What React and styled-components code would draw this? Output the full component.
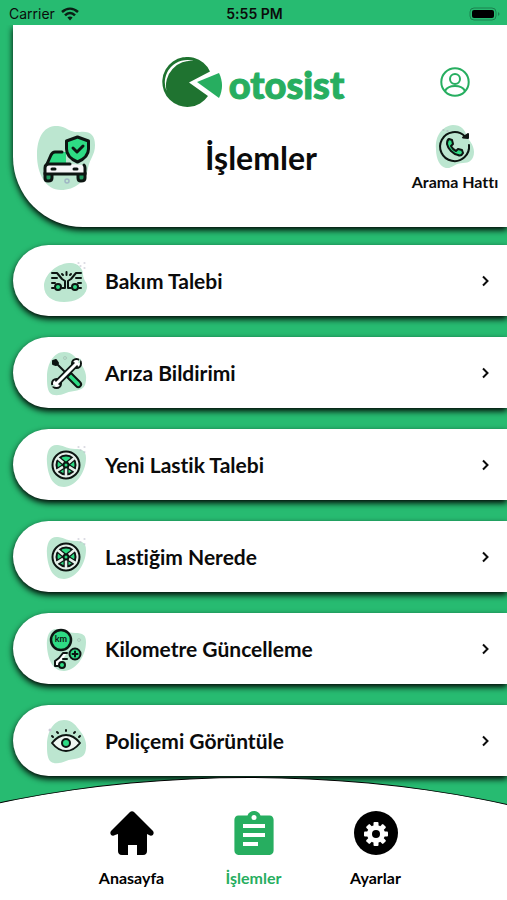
import React, { useState } from 'react';
import styled, { createGlobalStyle } from 'styled-components';

const GREEN = '#27bb71';
const BRAND = '#27ae60';
const MINT = '#bce6d0';
const ACCENT = '#2edb84';

const GlobalStyle = createGlobalStyle`
  * {
    box-sizing: border-box;
  }

  body {
    margin: 0;
    background-color: ${GREEN};
    font-family: Lato, 'Open Sans', sans-serif;
    font-variant-ligatures: none;
    color: #0b0b0b;
  }
`;

const Screen = styled.div`
  position: relative;
  display: flex;
  flex-direction: column;
  height: 100vh;
  overflow: hidden;
  background-color: ${GREEN};
`;

const StatusBar = styled.div`
  position: relative;
  z-index: 1;
  display: grid;
  grid-template-columns: 1fr auto 1fr;
  align-items: center;
  flex-shrink: 0;
  height: 25px;
  padding: 2px 7px 0 9px;
  background-color: ${GREEN};
  font-family: Inter, sans-serif;
  font-size: 14px;
  line-height: 20px;
`;

const Carrier = styled.div`
  display: flex;
  align-items: center;
  gap: 6px;
`;

const Clock = styled.span`
  font-weight: 600;
`;

const Battery = styled.svg`
  justify-self: end;
`;

const Content = styled.main`
  flex: 1;
  min-height: 0;
  padding-left: 13px;
  overflow-x: hidden;
  overflow-y: auto;
  scrollbar-width: none;
`;

const Header = styled.header`
  display: flex;
  flex-direction: column;
  gap: 18px;
  height: 202px;
  margin-bottom: 18px;
  padding-top: 32px;
  border-bottom-left-radius: 70px;
  background-color: #ffffff;
  box-shadow: 0 3px 6px #000000;
`;

const HeaderRow = styled.div`
  display: grid;
  grid-template-columns: ${(props) => props.$side} 1fr 104px;
  align-items: center;
  justify-items: center;
`;

const Logo = styled.div`
  grid-column: 2;
  display: flex;
  align-items: center;
  gap: 7px;
  height: 50px;
`;

const LogoText = styled.span`
  padding-top: 4px;
  color: ${BRAND};
  font-size: 38px;
  font-weight: 900;
  line-height: 40px;
  -webkit-text-stroke: 1px ${BRAND};
`;

const IconButton = styled.button`
  display: flex;
  flex-direction: column;
  align-items: center;
  gap: 4px;
  padding: 0;
  border: none;
  background: none;
  color: inherit;
  font-family: inherit;
  font-size: 16px;
  font-weight: 700;
  line-height: 18px;
  font-variant-ligatures: none;
  white-space: nowrap;
  cursor: pointer;
`;

const Title = styled.h1`
  margin: 0;
  font-size: 32px;
  font-weight: 700;
  line-height: 36px;
`;

const List = styled.ul`
  display: flex;
  flex-direction: column;
  gap: 21px;
  margin: 0;
  padding: 0 0 130px;
  list-style: none;
`;

const Row = styled.button`
  display: flex;
  align-items: center;
  gap: 14px;
  width: 100%;
  height: 71px;
  padding: 0 14px 0 30px;
  border: none;
  border-radius: 36px 0 0 36px;
  background-color: #ffffff;
  box-shadow: 0 3px 6px #000000;
  color: inherit;
  font-family: inherit;
  font-size: 21px;
  font-weight: 700;
  line-height: 24px;
  font-variant-ligatures: none;
  text-align: left;
  cursor: pointer;
`;

const RowLabel = styled.span`
  flex: 1;
`;

const TabBar = styled.nav`
  position: absolute;
  left: 0;
  right: 0;
  bottom: 0;
  display: flex;
  justify-content: center;
  height: 123px;
  padding-top: 34px;
  overflow: hidden;

  &::before {
    content: '';
    position: absolute;
    top: 0;
    left: -71%;
    width: 240%;
    height: 574px;
    border: 1px solid #000000;
    border-radius: 50%;
    background-color: #ffffff;
  }
`;

const Tab = styled.a`
  position: relative;
  display: flex;
  flex-direction: column;
  align-items: center;
  gap: 13px;
  width: 122px;
  color: ${(props) => (props.$active ? BRAND : '#000000')};
  font-size: 16px;
  font-weight: 700;
  line-height: 20px;
  text-decoration: none;
`;

const LineArt = styled.svg`
  flex-shrink: 0;
  fill: none;
  stroke: #0d1512;
  stroke-width: ${(props) => props.$weight || 2};
  stroke-linecap: round;
  stroke-linejoin: round;
`;

const Blob = styled.path`
  fill: ${MINT};
  stroke: none;
`;

const blobs = {
  wide: 'M1 29C1 19 12 7 26 6c8-1 14 5 14 11 0 7 5 8 4 14C42 41 31 45 21 45 9 45 1 39 1 29z',
  leaf: 'M4 22C3 10 7 3 15 4c7 1 10 4 17 4 8 0 11 2 11 9 0 15-11 29-22 29C10 46 5 35 4 22z',
  egg: 'M4 28C4 14 11 3 21 3c9 0 12 6 16 11 7 8 7 16 5 22-3 7-12 5-19 8-7 3-13 3-16 0-3-4-3-10-3-16z',
};

const Dots = () => (
  <path d="M35 6h1M41 6h1M41 11h1M37 9h1" stroke="#b9b9c8" strokeWidth="1" />
);

const CrashIcon = () => (
  <LineArt width="48" height="48" viewBox="0 0 48 48" aria-hidden="true">
    <Blob d={blobs.wide} />
    <Dots />
    <path d="M9 16h5l5 6 3 2v7h-3M9 21h5M9 26h3M9 31h2" />
    <circle cx="15" cy="30" r="3" fill={ACCENT} />
    <path d="M38 16h-5l-5 6-3 2v7h3M38 21h-5M38 26h-3M38 31h-2" />
    <circle cx="32" cy="30" r="3" fill={ACCENT} />
    <path d="M23.500 15v3M19 17l1 1M28 17l-1 1" />
  </LineArt>
);

const ToolsIcon = () => (
  <LineArt width="48" height="48" viewBox="0 0 48 48" aria-hidden="true">
    <Blob d={blobs.egg} />
    <circle cx="22" cy="9" r="1.500" stroke="#a9c9ba" strokeWidth="1" />
    <path d="M10 12l3-1 2 3-2 2-3-1z" fill="#0d1512" />
    <path d="M14 15l9 9" />
    <path d="M24 28l4-4 9 9c3 3-1 7-4 4z" fill={ACCENT} />
    <circle cx="13.500" cy="34.500" r="4.500" fill="#ffffff" />
    <circle cx="33.500" cy="14.500" r="4.500" fill="#ffffff" />
    <path d="M14 34l19-19" strokeWidth="6.500" strokeLinecap="butt" />
    <path d="M13 35l21-21" stroke="#ffffff" strokeWidth="3" />
    <path d="M8.500 37l3-.5M36 13.500l1-3" stroke={MINT} strokeWidth="1.500" />
  </LineArt>
);

const WheelIcon = () => (
  <LineArt width="48" height="48" viewBox="0 0 48 48" aria-hidden="true">
    <Blob d={blobs.leaf} />
    <Dots />
    <circle cx="23" cy="24" r="13.500" fill="#e4efe9" />
    <circle cx="23" cy="24" r="9.500" fill={ACCENT} strokeWidth="2" />
    {[50, 122, 180, 238, 310].map((angle) => (
      <g key={angle} transform={`rotate(${angle} 23 24)`}>
        <path d="M23 22V14" strokeWidth="5" strokeLinecap="butt" />
        <path d="M23 20v-7" stroke="#e4efe9" strokeWidth="2.500" />
      </g>
    ))}
    <circle cx="23" cy="24" r="2.500" fill={ACCENT} />
  </LineArt>
);

const MileageIcon = () => (
  <LineArt width="48" height="48" viewBox="0 0 48 48" aria-hidden="true">
    <Blob d={blobs.leaf} />
    <circle cx="36" cy="15" r="1.500" stroke="#a9c9ba" strokeWidth="1" />
    <path d="M24 28h-4l-4 5-4 3v5h3M20 34h4" fill="#ffffff" />
    <circle cx="19" cy="40" r="3" fill={ACCENT} />
    <circle cx="18" cy="15" r="10" fill={ACCENT} strokeWidth="2.500" />
    <text x="18" y="17" fontSize="9" fontWeight="700" textAnchor="middle" fill="#0d1512" stroke="none">
      km
    </text>
    <circle cx="32" cy="29" r="5.500" fill={ACCENT} />
    <path d="M32 26.500v5M29.500 29h5" />
  </LineArt>
);

const EyeIcon = () => (
  <LineArt width="48" height="48" viewBox="0 0 48 48" aria-hidden="true">
    <Blob d={blobs.egg} />
    <circle cx="7" cy="13" r="1.500" fill="#c9c9d6" stroke="none" />
    <path d="M9 26c4-5 9-8 14-8s10 3 14 8c-4 5-9 8-14 8s-10-3-14-8z" fill="#eef7f2" />
    <circle cx="23" cy="26" r="4" fill={ACCENT} />
    <path d="M23 13v1M14 15l1 1M32 15l-1 1M9 19l1 1M37 19l-1 1" />
  </LineArt>
);

const CarShieldIcon = () => (
  <LineArt width="58" height="65" viewBox="0 0 58 65" $weight={3} aria-label="Araç" role="img">
    <Blob d="M0 29C0 10 8-1 21 0c9 1 12 7 22 6 10-1 15 3 15 13 0 10-5 13-7 23-2 13-13 22-27 22C9 64 0 48 0 29z" />
    <path d="M10 38l3-9c1-2 2-3 4-3h12v12z" fill={ACCENT} stroke="none" />
    <path d="M25 26h-7c-2 0-3 1-4 3l-4 9" />
    <path d="M8 47h7v5c0 2-2 3-4 3s-3-1-3-3zM41 47h7v5c0 2-2 3-4 3s-3-1-3-3z" fill="#1f9d60" />
    <path d="M33 38H12c-3 0-4 2-4 4v6h40v-6c0-1 0-2-1-3l-14-1z" fill="#f6f6f8" stroke="none" />
    <path d="M33 38H12c-3 0-4 2-4 4v6h40v-6c0-1 0-2-1-3" />
    <path d="M15 43h3M37 43h3" />
    <path d="M40.500 11l11 4v8c0 6-4 10-11 13-7-3-11-7-11-13v-8z" fill={ACCENT} />
    <path d="M36 22l4 4 6-6" />
    <circle cx="30" cy="55" r="2" stroke="#9fb6c4" strokeWidth="1.500" />
  </LineArt>
);

const CallIcon = () => (
  <LineArt width="40" height="44" viewBox="0 0 40 44" aria-hidden="true">
    <Blob d="M1 24C0 11 7 1 18 0c8 0 12 5 13 9 2 6 8 10 8 18 0 8-5 11-11 11-8 0-11 6-17 5C5 42 1 34 1 24z" />
    <path d="M34 20A14.500 14.500 0 1 1 30 11.500" />
    <path d="M28 12.500l5 .5V9z" fill="#0d1512" />
    <path
      d="M14 14l3 1 1 4-2 2c1 2 3 4 5 5l2-2 4 1 1 3c-1 2-3 3-5 2-5-1-10-6-11-11 0-2 0-4 2-5z"
      fill={ACCENT}
    />
    <path d="M8 5h1M12 6h1" stroke="#a9a9b8" strokeWidth="1" />
  </LineArt>
);

const LogoMark = () => (
  <svg width="60" height="50" viewBox="0 0 60 50" aria-hidden="true">
    <path d="M27 25.500L48 14.500A25 25 0 1 0 46 39z" fill="#1f7330" />
    <path d="M4.500 34A22.500 22.500 0 0 1 32 4 25 25 0 0 0 4.500 34z" fill="#ffffff" />
    <path d="M35 25l22-9c4 8 4 17 0 25z" fill={BRAND} />
  </svg>
);

const ProfileIcon = () => (
  <svg width="30" height="30" viewBox="0 0 30 30" fill="none" stroke={BRAND} strokeWidth="2" aria-hidden="true">
    <circle cx="15" cy="15" r="13.700" />
    <circle cx="15" cy="12" r="5" />
    <path d="M5 24c2-4 6-5 10-5s8 1 10 5" />
  </svg>
);

const WifiIcon = () => (
  <svg width="18" height="14" viewBox="0 0 18 14" fill="none" stroke="#0a1f14" strokeWidth="2.500" aria-hidden="true">
    <path d="M1 5c5-4.500 11-4.500 16 0M4 8.300c3-3 7-3 10 0" />
    <path d="M9 9.500c1 0 2 .4 2.600 1L9 13.500l-2.600-3c.6-.6 1.600-1 2.600-1z" fill="#0a1f14" stroke="none" />
  </svg>
);

const ChevronIcon = () => (
  <svg width="16" height="16" viewBox="0 0 16 16" fill="none" stroke="#0b0b0b" strokeWidth="2" aria-hidden="true">
    <path d="M6 3.500L10.500 8 6 12.500" />
  </svg>
);

const HomeIcon = () => (
  <svg width="44" height="44" viewBox="0 0 44 44" aria-hidden="true">
    <path d="M20 1c1-1 3-1 4 0l19 19c2 3-1 6-4 4l-2-1v17c0 2-1 4-4 4h-6V34h-9v10h-6c-3 0-4-2-4-4V23l-3 1c-3 2-6-1-4-4z" />
  </svg>
);

const ClipboardIcon = () => (
  <svg width="44" height="44" viewBox="0 0 44 44" aria-hidden="true">
    <path
      d="M37.600 4.400h-9.100C27.600 1.800 25 0 22 0s-5.600 1.800-6.500 4.400H6.400C4 4.400 2.400 6.400 2.400 8.700v30.900c0 2.400 1.600 4.400 4 4.400h31.200c2.400 0 4-2 4-4.400V8.700c0-2.300-1.600-4.300-4-4.300z"
      fill={BRAND}
    />
    <circle cx="22" cy="6.500" r="2.500" fill="#ffffff" />
    <path d="M11 13h22v4H11zM11 22h22v4H11zM11 31h15v4H11z" fill="#ffffff" />
  </svg>
);

const SettingsIcon = () => (
  <svg width="44" height="44" viewBox="0 0 44 44" aria-hidden="true">
    <circle cx="22" cy="22" r="22" />
    <g fill="#ffffff">
      <circle cx="22" cy="23" r="9" />
      {[0, 45, 90, 135].map((angle) => (
        <rect key={angle} x="19.500" y="11" width="5" height="24" rx="1" transform={`rotate(${angle} 22 23)`} />
      ))}
    </g>
    <circle cx="22" cy="23" r="4" />
  </svg>
);

const operations = [
  { label: 'Bakım Talebi', Icon: CrashIcon },
  { label: 'Arıza Bildirimi', Icon: ToolsIcon },
  { label: 'Yeni Lastik Talebi', Icon: WheelIcon },
  { label: 'Lastiğim Nerede', Icon: WheelIcon },
  { label: 'Kilometre Güncelleme', Icon: MileageIcon },
  { label: 'Poliçemi Görüntüle', Icon: EyeIcon },
];

const tabs = [
  { id: 'anasayfa', label: 'Anasayfa', Icon: HomeIcon },
  { id: 'islemler', label: 'İşlemler', Icon: ClipboardIcon },
  { id: 'ayarlar', label: 'Ayarlar', Icon: SettingsIcon },
];

const App = () => {
  const [activeTab, setActiveTab] = useState('islemler');

  return (
    <Screen lang="tr">
      <GlobalStyle />
      <StatusBar>
        <Carrier>
          Carrier
          <WifiIcon />
        </Carrier>
        <Clock>5:55 PM</Clock>
        <Battery width="31" height="14" viewBox="0 0 31 14" aria-hidden="true">
          <rect x="1" y="1" width="26" height="12" rx="4" fill="none" stroke="#1c8250" />
          <rect x="3" y="3" width="22" height="8" rx="2" />
          <path d="M29 5c2 1 2 3 0 4z" fill="#1c8250" />
        </Battery>
      </StatusBar>
      <Content>
        <Header>
          <HeaderRow $side="90px">
            <Logo>
              <LogoMark />
              <LogoText>otosist</LogoText>
            </Logo>
            <IconButton type="button" aria-label="Profil">
              <ProfileIcon />
            </IconButton>
          </HeaderRow>
          <HeaderRow $side="106px">
            <CarShieldIcon />
            <Title>İşlemler</Title>
            <IconButton type="button">
              <CallIcon />
              Arama Hattı
            </IconButton>
          </HeaderRow>
        </Header>
        <List>
          {operations.map(({ label, Icon }) => (
            <li key={label}>
              <Row type="button">
                <Icon />
                <RowLabel>{label}</RowLabel>
                <ChevronIcon />
              </Row>
            </li>
          ))}
        </List>
      </Content>
      <TabBar>
        {tabs.map(({ id, label, Icon }) => (
          <Tab key={id} href={`#${id}`} $active={activeTab === id} onClick={() => setActiveTab(id)}>
            <Icon />
            {label}
          </Tab>
        ))}
      </TabBar>
    </Screen>
  );
};

export default App;
